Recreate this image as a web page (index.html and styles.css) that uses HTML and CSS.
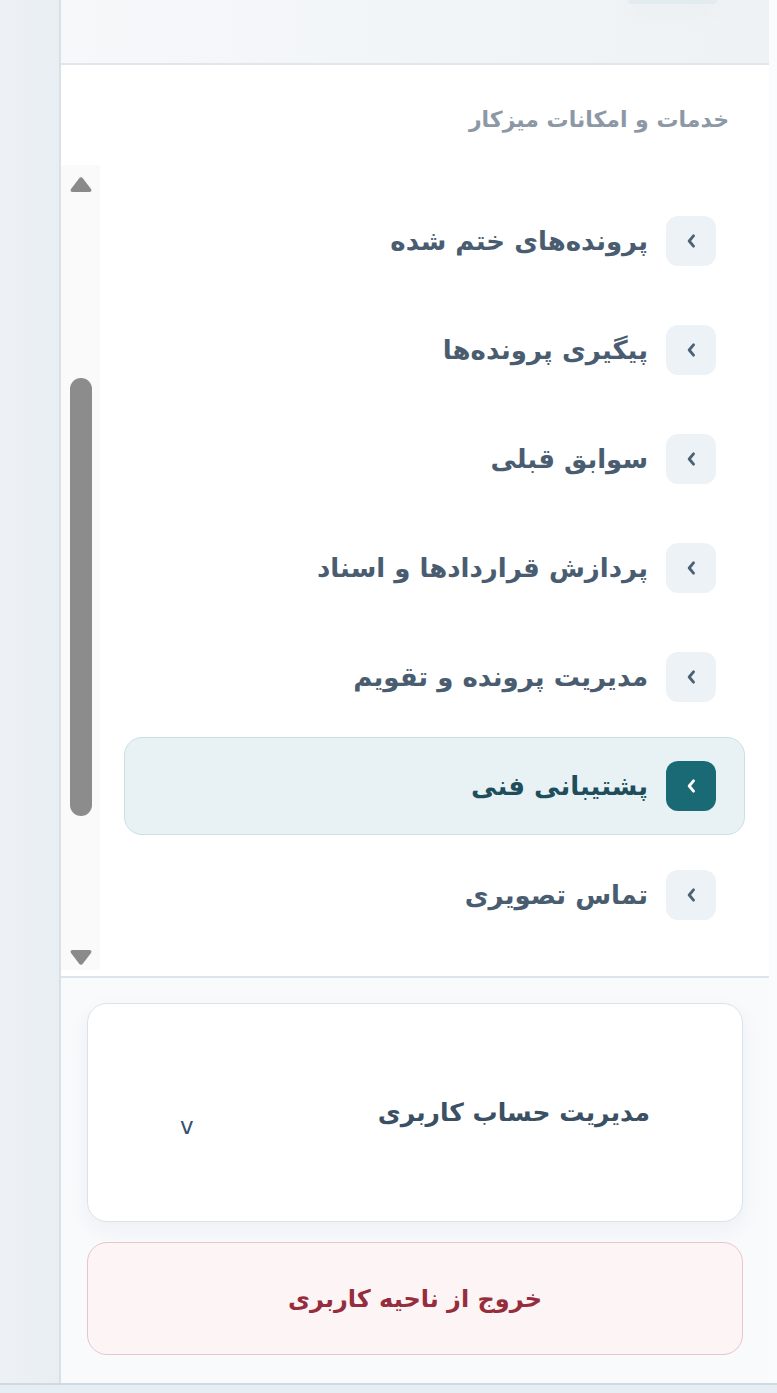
FILE: index.html
```html
<!DOCTYPE html>
<html lang="fa" dir="rtl">

<head>
    <meta charset="UTF-8">
    <meta name="viewport" content="width=device-width, initial-scale=1.0">
    <title>میزکار</title>
    <link rel="stylesheet" href="styles.css">
</head>

<body>

    <div class="shell">
        <aside class="sidebar">
            <div class="sidebar-top">
                <span class="top-pill"></span>
            </div>

            <nav class="services">
                <h2 class="services-title">خدمات و امکانات میزکار</h2>

                <div class="scroll-area">
                    <ul class="menu">
                        <li class="menu-item">
                            <span class="chevron-box"><svg width="9" height="14" viewBox="0 0 9 14"><polyline points="6.5,1.8 2.2,7 6.5,12.2" /></svg></span>
                            <span class="menu-label">پرونده‌های ختم شده</span>
                        </li>
                        <li class="menu-item">
                            <span class="chevron-box"><svg width="9" height="14" viewBox="0 0 9 14"><polyline points="6.5,1.8 2.2,7 6.5,12.2" /></svg></span>
                            <span class="menu-label">پیگیری پرونده‌ها</span>
                        </li>
                        <li class="menu-item">
                            <span class="chevron-box"><svg width="9" height="14" viewBox="0 0 9 14"><polyline points="6.5,1.8 2.2,7 6.5,12.2" /></svg></span>
                            <span class="menu-label">سوابق قبلی</span>
                        </li>
                        <li class="menu-item">
                            <span class="chevron-box"><svg width="9" height="14" viewBox="0 0 9 14"><polyline points="6.5,1.8 2.2,7 6.5,12.2" /></svg></span>
                            <span class="menu-label">پردازش قراردادها و اسناد</span>
                        </li>
                        <li class="menu-item">
                            <span class="chevron-box"><svg width="9" height="14" viewBox="0 0 9 14"><polyline points="6.5,1.8 2.2,7 6.5,12.2" /></svg></span>
                            <span class="menu-label">مدیریت پرونده و تقویم</span>
                        </li>
                        <li class="menu-item active">
                            <span class="chevron-box"><svg width="9" height="14" viewBox="0 0 9 14"><polyline points="6.5,1.8 2.2,7 6.5,12.2" /></svg></span>
                            <span class="menu-label">پشتیبانی فنی</span>
                        </li>
                        <li class="menu-item">
                            <span class="chevron-box"><svg width="9" height="14" viewBox="0 0 9 14"><polyline points="6.5,1.8 2.2,7 6.5,12.2" /></svg></span>
                            <span class="menu-label">تماس تصویری</span>
                        </li>
                    </ul>

                    <!-- scrollbar of the list -->
                    <div class="scrollbar">
                        <svg class="scroll-arrow" width="24" height="17" viewBox="0 0 24 17"><path d="M10 2.5 Q12 0 14 2.5 L22 13 Q23.5 16 20 16 L4 16 Q0.5 16 2 13 Z" /></svg>
                        <div class="scroll-track">
                            <div class="scroll-thumb"></div>
                        </div>
                        <svg class="scroll-arrow" width="24" height="17" viewBox="0 0 24 17"><path d="M10 14.5 Q12 17 14 14.5 L22 4 Q23.5 1 20 1 L4 1 Q0.5 1 2 4 Z" /></svg>
                    </div>
                </div>
            </nav>

            <div class="account">
                <div class="account-card">
                    <span class="account-label">مدیریت حساب کاربری</span>
                    <span class="account-caret">v</span>
                </div>
                <button class="logout">خروج از ناحیه کاربری</button>
            </div>
        </aside>

        <div class="rail"></div>
    </div>

    <div class="bottom-strip"></div>

</body>

</html>
```

FILE: styles.css
```css
* {
    box-sizing: border-box;
}

body {
    font-family: 'DejaVu Sans', 'Noto Sans', sans-serif;
    margin: 0;
    padding: 0;
    background-color: #fafbfc;
    color: #33475b;
}

.shell {
    display: flex;
    height: 1383px;
}

.sidebar {
    width: 710px;
    margin-right: 8px;
    display: flex;
    flex-direction: column;
    background-color: #ffffff;
    border-left: 2px solid #d8e0e8;
}

.rail {
    flex: 1;
    background: linear-gradient(to left, #e9eef3, #edf1f5);
}

/* header strip (the page is scrolled, only its bottom shows) */
.sidebar-top {
    height: 65px;
    background: linear-gradient(to left, #eef2f5, #f6f8fa);
    border-bottom: 2px solid #dfe6ed;
    display: flex;
    align-items: flex-start;
    padding-right: 52px;
}

.top-pill {
    width: 89px;
    height: 4px;
    background-color: #e2ebef;
    border-radius: 0 0 14px 14px;
    box-shadow: 0 6px 22px rgba(40, 60, 80, 0.08);
}

.services {
    display: flex;
    flex-direction: column;
    border-bottom: 2px solid #dde4ec;
    padding-bottom: 6px;
}

.services-title {
    margin: 0;
    padding: 42px 40px 0 0;
    height: 100px;
    font-size: 22px;
    font-weight: bold;
    color: #8c98a5;
}

.scroll-area {
    display: flex;
    height: 805px;
    overflow: hidden;
}

.menu {
    flex: 1;
    list-style: none;
    margin: 0;
    padding: 27px 24px 0 24px;
    display: flex;
    flex-direction: column;
    gap: 11px;
}

.menu-item {
    display: flex;
    align-items: center;
    gap: 18px;
    height: 98px;
    padding: 0 28px;
    border: 1px solid transparent;
    border-radius: 18px;
}

.chevron-box {
    width: 50px;
    height: 50px;
    flex-shrink: 0;
    border-radius: 12px;
    background-color: #edf2f7;
    display: flex;
    align-items: center;
    justify-content: center;
}

.chevron-box polyline {
    fill: none;
    stroke: #4b6176;
    stroke-width: 2.8;
    stroke-linecap: round;
    stroke-linejoin: round;
}

.menu-label {
    font-size: 26px;
    font-weight: bold;
    color: #4a5d70;
    white-space: nowrap;
}

.menu-item.active {
    background-color: #e8f2f5;
    border-color: #c9e0e6;
}

.menu-item.active .chevron-box {
    background-color: #1a6a76;
}

.menu-item.active polyline {
    stroke: #ffffff;
}

.menu-item.active .menu-label {
    color: #1e4e5b;
}

.scrollbar {
    width: 39px;
    background-color: #fafafa;
    display: flex;
    flex-direction: column;
    align-items: center;
    padding: 11px 0 4px;
}

.scroll-arrow path {
    fill: #8a8a8a;
}

.scroll-track {
    flex: 1;
    width: 100%;
    display: flex;
    justify-content: center;
    padding-top: 185px;
}

.scroll-thumb {
    width: 22px;
    height: 438px;
    background-color: #8c8c8c;
    border-radius: 11px;
}

.account {
    flex: 1;
    background-color: #f8fafc;
    padding: 25px 26px 28px 26px;
    display: flex;
    flex-direction: column;
    gap: 20px;
}

.account-card {
    height: 219px;
    background-color: #ffffff;
    border: 1px solid #dbe3ea;
    border-radius: 20px;
    box-shadow: 0 8px 22px rgba(30, 50, 70, 0.05);
    display: flex;
    align-items: center;
    justify-content: space-around;
}

.account-label {
    font-size: 25px;
    font-weight: bold;
    color: #3b5063;
}

.account-caret {
    font-size: 23px;
    color: #35526c;
    margin-top: 26px;
}

.logout {
    height: 113px;
    font-family: inherit;
    font-size: 24px;
    font-weight: bold;
    color: #962d3d;
    background-color: #fdf4f5;
    border: 1px solid #e8c5c8;
    border-radius: 20px;
}

.bottom-strip {
    height: 10px;
    background-color: #e6edf3;
    border-top: 2px solid #cfd9e2;
}
```
